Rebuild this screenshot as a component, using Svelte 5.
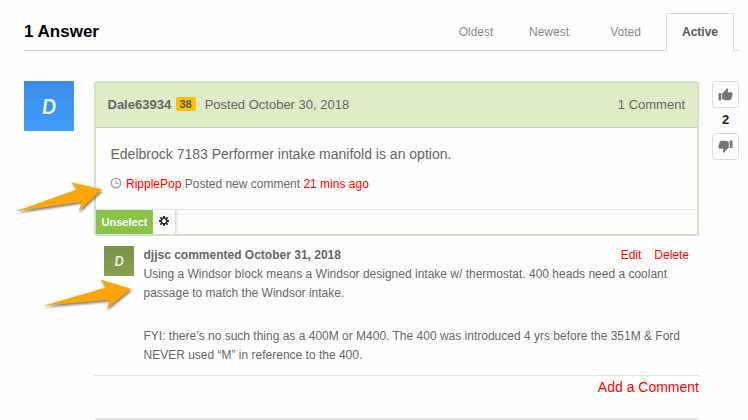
<script lang="ts">
	const tabs = ['Oldest', 'Newest', 'Voted', 'Active'];
	let active = $state('Active');
	let votes = $state(2);

	const comment = [
		'Using a Windsor block means a Windsor designed intake w/ thermostat. 400 heads need a coolant passage to match the Windsor intake.',
		'FYI: there’s no such thing as a 400M or M400. The 400 was introduced 4 yrs before the 351M & Ford NEVER used “M” in reference to the 400.'
	];
</script>

{#snippet thumb()}
	<svg width="15" height="13" viewBox="0 0 15 13" fill="#757575">
		<path d="M0.5 5h2.8v7.5H0.5z" />
		<path d="M4.2 5.3 8 1.8 8.5.2C10.2.2 10.6 1.5 9.7 4.2h3.6c1 0 1.5.8 1 1.5.5.7.4 1.4-.2 1.8.3.7.1 1.3-.5 1.7.3.8-.1 1.5-.8 1.7.1 1-.4 1.3-1.3 1.3H7.2L4.2 11z" />
	</svg>
{/snippet}

<main>
	<header>
		<h1>1 Answer</h1>
		<nav>
			{#each tabs as tab (tab)}
				<button class="tab" class:active={tab === active} onclick={() => (active = tab)}>{tab}</button>
			{/each}
		</nav>
	</header>

	<div class="answer">
		<div class="avatar">D</div>

		<div class="body">
			<article>
				<div class="head">
					<strong>Dale63934</strong>
					<span class="points">38</span>
					<span class="date">Posted October 30, 2018</span>
					<span class="count">1 Comment</span>
				</div>
				<div class="content">
					<p>Edelbrock 7183 Performer intake manifold is an option.</p>
					<div class="history">
						<svg width="12" height="12" viewBox="0 0 12 12" fill="none" stroke="#a6a6a6">
							<circle cx="6" cy="6" r="4.7" stroke-width="1.6" />
							<path d="M6 3v3.5h3" stroke-width="1.2" />
						</svg>
						<span><a href="#user">RipplePop</a> Posted new comment <a href="#time">21 mins ago</a></span>
					</div>
				</div>
				<div class="actions">
					<button class="unselect">Unselect</button>
					<button class="gear" aria-label="Options">
						<svg width="10" height="10" viewBox="-5 -5 10 10" fill="none" stroke="#292929">
							<circle r="2.8" stroke-width="1.5" />
							<g stroke-width="1.8">
								<path d="M0-5v2M0 3v2M-5 0h2M3 0h2" />
								<path d="M-3.6-3.6l1.3 1.3M2.3 2.3l1.3 1.3M3.6-3.6 2.3-2.3M-2.3 2.3l-1.3 1.3" />
							</g>
						</svg>
					</button>
				</div>
			</article>

			<section class="comment">
				<div class="avatar small">D</div>
				<div class="text">
					<div class="meta">
						<strong>djjsc commented October 31, 2018</strong>
						<span><a href="#edit">Edit</a><a href="#delete">Delete</a></span>
					</div>
					{#each comment as p}
						<p>{p}</p>
					{/each}
				</div>
			</section>
			<div class="add"><a href="#add">Add a Comment</a></div>
			<div class="next"></div>
		</div>

		<div class="votes">
			<button aria-label="Vote up" onclick={() => votes++}>{@render thumb()}</button>
			<b>{votes}</b>
			<button class="down" aria-label="Vote down" onclick={() => votes--}>{@render thumb()}</button>
		</div>
	</div>

	<!-- callout arrows over the page -->
	<svg class="arrows" width="748" height="420" viewBox="0 0 748 420" fill="#ffa50a">
		<path d="M15 211.5 77.3 189.2 71 182.2 102 189.3 78.7 211.2 81.7 201.8z" />
		<path d="M43 305.8 105.9 287.6 100.5 279.6 131.2 288.7 106.5 308.8 109.9 299.8z" />
	</svg>
</main>

<style>
	:global(body) { background: #fefefe; overflow: hidden; }
	main {
		position: relative; width: 748px; height: 420px; overflow: hidden; box-sizing: border-box;
		padding: 13px 9px 0 24px; background: #fefefe; color: #666;
		font: 12px/19px "Liberation Sans", Arial, sans-serif;
	}
	h1, p { margin: 0; }
	a { color: #f00; text-decoration: none; }
	button { font: inherit; border: 0; padding: 0; margin: 0; background: none; color: inherit; }

	header { display: flex; justify-content: space-between; height: 37px; border-bottom: 1px solid #dcdcdc; }
	h1 { font-size: 17px; line-height: 37px; color: #000; }
	nav { display: flex; height: 38px; padding-right: 5px; }
	.tab {
		box-sizing: border-box; width: 73px; height: 38px; padding-bottom: 2px; line-height: 34px;
		color: #888; border: 1px solid transparent; border-bottom: 0; text-align: center;
	}
	.tab:nth-child(1) { width: 70px; }
	.tab:nth-child(2) { width: 76px; }
	.tab:nth-child(3) { width: 77px; }
	.tab.active { width: 68px; margin-left: 2px; font-weight: bold; color: #555; background: #fefefe; border-color: #dcdcdc; border-radius: 2px 2px 0 0; }

	.answer { display: flex; margin-top: 30px; }
	.avatar {
		width: 50px; height: 50px; flex: none; background: linear-gradient(#3b8de6, #429dfc); color: #e8fbff;
		font: italic bold 20px/50px Lato, sans-serif; text-align: center;
	}
	.body { width: 605px; margin-left: 20px; }
	article { box-sizing: border-box; height: 155px; border: 2px solid #cbe4c5; border-radius: 3px; overflow: hidden; display: flex; flex-direction: column; }
	.head { display: flex; align-items: center; box-sizing: border-box; height: 45px; padding: 0 12px 2px 11.5px; background: #deecc8; border-bottom: 1px solid #c0d5a4; font-size: 13px; }
	.points { margin: 0 9px 1px 4.5px; width: 20px; height: 14px; border-radius: 2px; background: #ffc107; font: bold 11px/14px "Liberation Sans", sans-serif; text-align: center; color: #555; }
	.count { margin-left: auto; }
	.content { flex: 1; padding: 16px 14px 0 14.5px; }
	.content p { font-size: 14px; line-height: 21px; }
	.history { display: flex; align-items: center; gap: 4px; margin-top: 10px; }
	.history svg { margin: 0 0 3px -1px; }
	.history span { margin-left: .5px; }
	.actions { display: flex; height: 24px; border-top: 1px solid #e2e2e2; }
	.unselect { width: 57px; background: #8bc34a; color: #fff; font-size: 11px; font-weight: bold; }
	.gear { display: flex; align-items: center; justify-content: center; width: 23px; padding-bottom: 2px; border-right: 1px solid #ddd; box-shadow: 1px 0 2px #ddd; }

	.comment { display: flex; box-sizing: border-box; height: 140px; padding: 10px 10px 0; border-bottom: 1px solid #e0e0e0; }
	.small { width: 30px; height: 30px; background: linear-gradient(#78934c, #89a052); color: #edf2df; font-size: 13px; line-height: 30px; }
	.text { flex: 1; margin-left: 9.5px; }
	.text p { margin-bottom: 24px; }
	.meta { display: flex; justify-content: space-between; }
	.meta a { margin-left: 13px; }
	.add { height: 42px; text-align: right; font-size: 14px; line-height: 23px; }
	.next { height: 20px; border: 2px solid #e4e4e4; border-radius: 3px; box-sizing: border-box; }

	.votes { display: flex; flex-direction: column; align-items: center; width: 27px; margin-left: 13px; }
	.votes button { display: flex; align-items: center; justify-content: center; box-sizing: border-box; width: 27px; height: 27px; border: 1px solid #ddd; border-radius: 3px; }
	.votes b { height: 25px; font-size: 13px; line-height: 23px; color: #222; }
	.down svg { transform: rotate(180deg); }

	.arrows { position: absolute; left: 0; top: 0; pointer-events: none; filter: drop-shadow(1px 2px 1px #0007); }
</style>
